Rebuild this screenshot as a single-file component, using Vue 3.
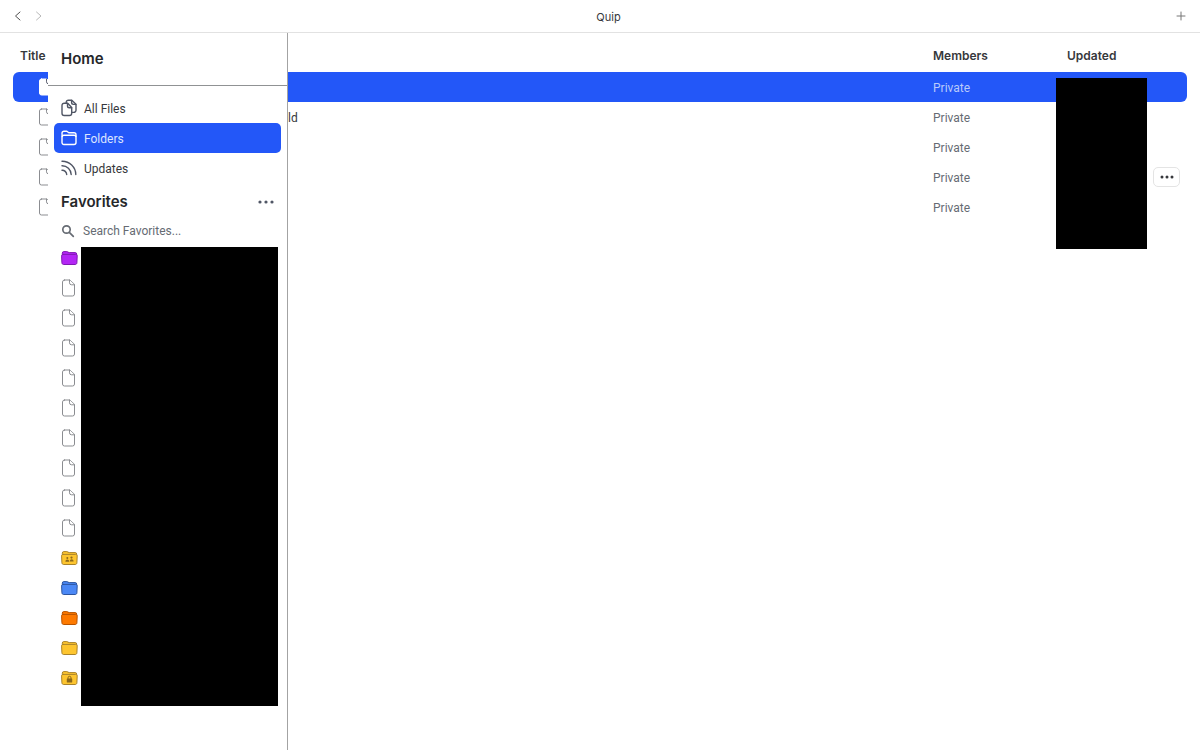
<script setup>
import { ref } from 'vue'

const documents = [
  { id: 1, name: '', members: 'Private', selected: true },
  { id: 2, name: 'ld', members: 'Private' },
  { id: 3, name: '', members: 'Private' },
  { id: 4, name: '', members: 'Private', menu: true },
  { id: 5, name: '', members: 'Private' },
]

const favorites = [
  { kind: 'folder', color: 'purple' },
  ...Array.from({ length: 9 }, () => ({ kind: 'file' })),
  { kind: 'folder', color: 'yellow', badge: 'people' },
  { kind: 'folder', color: 'blue' },
  { kind: 'folder', color: 'orange' },
  { kind: 'folder', color: 'yellow' },
  { kind: 'folder', color: 'yellow', badge: 'lock' },
]

const search = ref('')
</script>

<template>
  <div class="app">
    <header class="titlebar">
      <nav class="history">
        <button type="button" aria-label="Back">
          <svg width="8" height="10" viewBox="0 0 8 10"><path d="M6 1 1.5 5 6 9" /></svg>
        </button>
        <button type="button" class="faded" aria-label="Forward">
          <svg width="8" height="10" viewBox="0 0 8 10"><path d="M1.5 1 6 5 1.5 9" /></svg>
        </button>
      </nav>
      <span class="app-name">Quip</span>
      <button type="button" class="add" aria-label="New tab">
        <svg width="10" height="10" viewBox="0 0 10 10"><path d="M5 1v8M1 5h8" /></svg>
      </button>
    </header>

    <main class="content">
      <table class="documents">
        <thead>
          <tr>
            <th class="title-col">Title</th>
            <th class="members-col">Members</th>
            <th class="updated-col">Updated</th>
            <th class="action-col"></th>
          </tr>
        </thead>
        <tbody>
          <tr v-for="doc in documents" :key="doc.id" :class="{ selected: doc.selected }">
            <td>
              <div class="doc-name">
                <svg class="file" width="15" height="18" viewBox="0 0 15 18">
                  <path d="M3.500 1h5.300L13.500 5.300v9.700a2 2 0 0 1-2 2h-8a2 2 0 0 1-2-2V3a2 2 0 0 1 2-2Z" />
                  <path d="M8.500 1v2.800a2 2 0 0 0 2 2h3" />
                </svg>
                <span>{{ doc.name }}</span>
              </div>
            </td>
            <td class="members">{{ doc.members }}</td>
            <td></td>
            <td>
              <button v-if="doc.menu" type="button" class="row-menu" aria-label="Document options">
                <svg width="14" height="4" viewBox="0 0 14 4"><circle cx="2" cy="2" r="1.500" /><circle cx="7" cy="2" r="1.500" /><circle cx="12" cy="2" r="1.500" /></svg>
              </button>
            </td>
          </tr>
        </tbody>
      </table>
      <div class="date-cover"></div>

      <aside class="drawer">
        <h1>Home</h1>
        <nav class="places">
          <a href="#files">
            <svg width="16" height="18" viewBox="0 0 16 18">
              <path d="M4.800 4.200H3.200A2.200 2.200 0 0 0 1 6.400v7.900a2.200 2.200 0 0 0 2.200 2.200h5.300a2.200 2.200 0 0 0 2.200-2.200v-.8" />
              <path d="M5.200 4.300V3.400a2.200 2.200 0 0 1 2.200-2.200h3.400L15 5.200v6a2.200 2.200 0 0 1-2.200 2.200h-2.100V8.500L6.700 4.300H5.200Z" />
              <path d="M6.500 4.500v2.400a1.800 1.800 0 0 0 1.800 1.800h2.300M10.600 1.400v2.200a1.800 1.800 0 0 0 1.800 1.800h2.400" />
            </svg>
            <span>All Files</span>
          </a>
          <a href="#folders" class="active">
            <svg width="16" height="18" viewBox="0 0 16 18">
              <path d="M1.200 7.500 1 4.200a2 2 0 0 1 2-2h2.800l2 1.600H13a2 2 0 0 1 2 2v1.700" />
              <rect x="1" y="6.300" width="14" height="9.200" rx="2" />
            </svg>
            <span>Folders</span>
          </a>
          <a href="#updates">
            <svg width="16" height="18" viewBox="0 0 16 18">
              <path d="M1 2.200A13.500 13.500 0 0 1 14.800 15.500M1 6.700a9 9 0 0 1 9.200 8.800M1 11.200a4.500 4.500 0 0 1 4.700 4.300" />
            </svg>
            <span>Updates</span>
          </a>
        </nav>

        <div class="section-head">
          <h2>Favorites</h2>
          <button type="button" aria-label="Favorites options">
            <svg width="16" height="4" viewBox="0 0 16 4"><circle cx="2" cy="2" r="1.600" /><circle cx="8" cy="2" r="1.600" /><circle cx="14" cy="2" r="1.600" /></svg>
          </button>
        </div>

        <label class="search">
          <svg width="14" height="14" viewBox="0 0 14 14"><circle cx="5.500" cy="5.500" r="3.700" /><path d="m8.300 8.300 4 4" /></svg>
          <input v-model="search" type="text" placeholder="Search Favorites..." aria-label="Search favorites" />
        </label>

        <div class="favorites">
          <ul>
            <li v-for="(item, i) in favorites" :key="i">
              <svg v-if="item.kind === 'file'" class="file" width="15" height="18" viewBox="0 0 15 18">
                <path d="M3.500 1h5.300L13.500 5.300v9.700a2 2 0 0 1-2 2h-8a2 2 0 0 1-2-2V3a2 2 0 0 1 2-2Z" />
                <path d="M8.500 1v2.800a2 2 0 0 0 2 2h3" />
              </svg>
              <svg v-else class="folder" :class="item.color" width="17" height="16" viewBox="0 0 17 16">
                <path d="M1.300 6V3.100a1.500 1.500 0 0 1 1.500-1.500h3c1 0 1.400 1 2.400 1h6a1.500 1.500 0 0 1 1.500 1.500V6Z" />
                <path d="M2.200 4.400h12.400c1.100 0 1.700.7 1.600 1.700l-.3 6.700c-.1 1.100-.7 1.700-1.700 1.700H2.600c-1 0-1.600-.6-1.700-1.700L.6 6.100C.5 5.100 1.100 4.400 2.200 4.400Z" />
                <g v-if="item.badge === 'people'" class="badge">
                  <circle cx="6.300" cy="8" r="1" /><circle cx="10.500" cy="7.600" r="1.100" />
                  <path d="M4.400 11.800c0-3 3.800-3 3.800 0ZM8.800 11.500c0-3 3.800-3 3.800 0Z" />
                </g>
                <g v-if="item.badge === 'lock'" class="badge">
                  <rect x="5.800" y="8.600" width="5.400" height="4" rx=".5" />
                  <path class="shackle" d="M7 9V7.800a1.500 1.500 0 0 1 3 0V9" />
                </g>
              </svg>
            </li>
          </ul>
          <div class="names-cover"></div>
        </div>
      </aside>
    </main>
  </div>
</template>

<style>
body {
  margin: 0;
  background: #fff;
}
</style>

<style scoped>
.app {
  display: flex;
  flex-direction: column;
  min-height: 100vh;
  font-family: Roboto, "Liberation Sans", sans-serif;
  font-size: 12px;
  line-height: 18px;
  color: #36383c;
}
.app * {
  box-sizing: border-box;
}
button {
  display: flex;
  align-items: center;
  justify-content: center;
  padding: 0;
  border: 0;
  background: none;
  font: inherit;
}
svg {
  display: block;
  flex: none;
  fill: none;
  stroke: currentColor;
  stroke-linecap: round;
  stroke-linejoin: round;
}
.titlebar {
  display: grid;
  grid-template-columns: 1fr auto 1fr;
  align-items: center;
  height: 33px;
  padding: 0 13px;
  border-bottom: 1px solid #e2e2e2;
}
.history {
  display: flex;
  gap: 12px;
}
.history button {
  width: 9px;
  height: 20px;
  color: #505050;
}
.history .faded {
  color: #b8b8b8;
}
.app-name {
  padding: 2px 0 0 17px;
  font-family: Inter, "Liberation Sans", sans-serif;
  font-size: 11px;
}
.add {
  justify-self: end;
  width: 12px;
  height: 20px;
  color: #777;
}
.content {
  position: relative;
  flex: 1;
  padding: 7px 13px 0;
}
.documents {
  width: 100%;
  table-layout: fixed;
  border-collapse: collapse;
}
.documents th,
.documents td {
  height: 30px;
  padding: 0;
  text-align: left;
}
.documents th {
  height: 32px;
  font-family: Inter, "Liberation Sans", sans-serif;
  font-weight: 600;
}
.documents .title-col {
  padding-left: 7px;
}
.members-col {
  width: 134px;
}
.updated-col {
  width: 86px;
}
.action-col {
  width: 34px;
}
.documents .members {
  padding-top: 1px;
  color: #666b73;
}
.selected td {
  background: #2357f8;
}
.selected td:first-child {
  border-radius: 6px 0 0 6px;
}
.selected td:last-child {
  border-radius: 0 6px 6px 0;
}
.documents .selected .members {
  color: #b9cafb;
}
.doc-name {
  display: flex;
  align-items: center;
  gap: 235px;
  padding-left: 25px;
}
.doc-name span,
.places span {
  padding-top: 2px;
}
.file {
  color: #8b8d91;
  fill: #fff;
}
.selected .file {
  color: #fff;
}
.selected .file path:last-child {
  stroke: #5b6070;
}
.row-menu {
  width: 27px;
  height: 20px;
  border: 1px solid #e4e4e4;
  border-radius: 5px;
  background: #fff;
  color: #36383c;
}
.row-menu svg,
.section-head svg {
  fill: currentColor;
  stroke: none;
}
.date-cover {
  position: absolute;
  top: 45px;
  right: 53px;
  width: 91px;
  height: 171px;
  background: #000;
}
.drawer {
  position: absolute;
  top: 0;
  bottom: 0;
  left: 48px;
  width: 240px;
  border-right: 1px solid #a3a3a3;
  background: #fff;
}
h1,
h2 {
  margin: 0;
  font-family: Inter, "Liberation Sans", sans-serif;
  font-size: 15px;
  font-weight: 600;
  line-height: 20px;
  color: #25272a;
}
h1 {
  height: 53px;
  padding: 16px 13px 0;
  border-bottom: 1px solid #909294;
}
.places {
  padding: 7px 6px 0;
}
.places a {
  display: flex;
  align-items: center;
  gap: 7px;
  height: 30px;
  padding: 0 7px;
  border-radius: 5px;
  color: inherit;
  text-decoration: none;
}
.places svg {
  color: #505665;
  stroke-width: 1.400;
}
.places .active {
  background: #2357f8;
  color: #dce5ff;
}
.places .active svg {
  color: #fff;
}
.section-head {
  display: flex;
  align-items: center;
  justify-content: space-between;
  height: 36px;
  padding: 2px 13px 0;
}
.section-head button {
  height: 20px;
  color: #505665;
}
.search {
  display: flex;
  align-items: center;
  gap: 8px;
  height: 24px;
  padding: 0 13px;
  color: #666b73;
}
.search svg {
  stroke-width: 1.700;
}
.search input {
  flex: 1;
  min-width: 0;
  padding: 0;
  border: 0;
  outline: 0;
  background: none;
  font: inherit;
  color: #36383c;
}
.search input::placeholder {
  color: #666b73;
  opacity: 1;
}
.favorites {
  display: flex;
  padding: 0 9px 0 13px;
}
.favorites ul {
  width: 20px;
  margin: 0;
  padding: 0;
  list-style: none;
}
.favorites li {
  display: flex;
  align-items: center;
  height: 30px;
}
.names-cover {
  flex: 1;
  height: 459px;
  margin-top: 4px;
  background: #000;
}
.purple {
  fill: #b326f5;
  color: #8019b3;
}
.yellow {
  fill: #fdc52f;
  color: #a9832b;
}
.blue {
  fill: #4b88f5;
  color: #2d559f;
}
.orange {
  fill: #fd7900;
  color: #b85300;
}
.badge {
  fill: #8b681b;
  stroke: none;
}
.badge .shackle {
  fill: none;
  stroke: #8b681b;
}
</style>
